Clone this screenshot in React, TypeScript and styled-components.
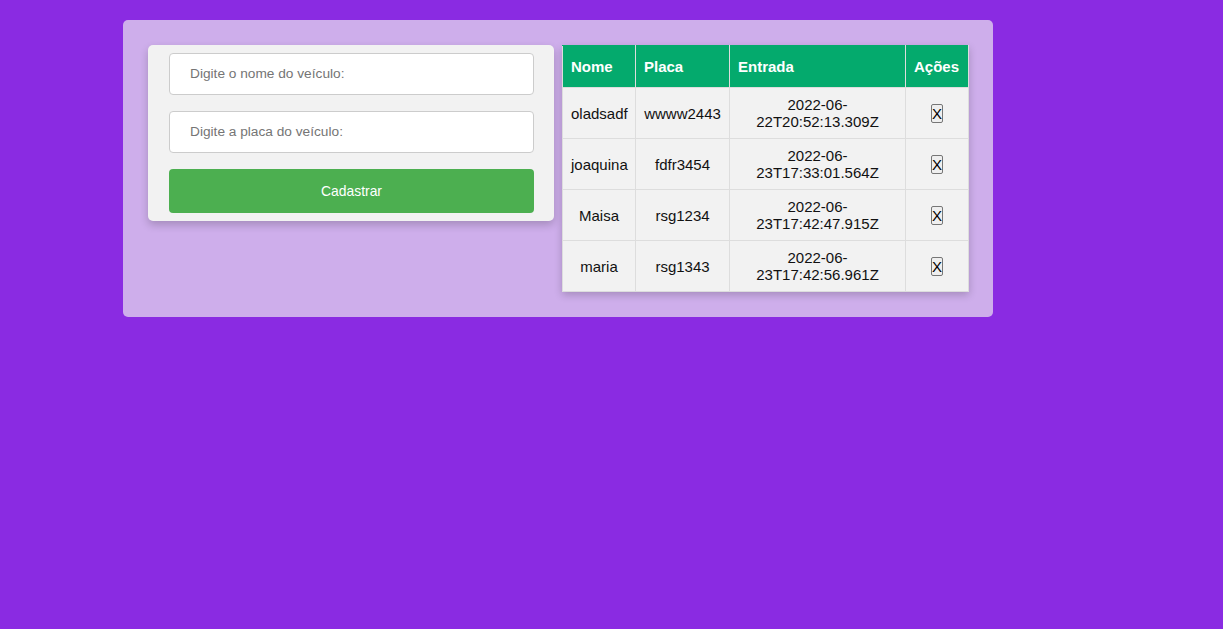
import styled, { createGlobalStyle } from 'styled-components';

const GlobalStyle = createGlobalStyle`
    body {
        margin: 0;
        background: #8a2be2;
        font-family: 'Liberation Sans', Arial, Helvetica, sans-serif;
    }
`;

const Page = styled.div`
    min-height: 629px;
    padding: 20px 0 0 123px;
    box-sizing: border-box;
`;

const Panel = styled.div`
    width: 870px;
    display: flex;
    align-items: flex-start;
    gap: 8px;
    padding: 25px;
    box-sizing: border-box;
    background: #ceaeeb;
    border-radius: 5px;
`;

const FormCard = styled.form`
    flex: 0 0 406px;
    padding: 0 20px 0 21px;
    box-sizing: border-box;
    background: #f2f2f2;
    border-radius: 5px;
    box-shadow: 0 4px 8px rgba(0, 0, 0, 0.2);
`;

const Input = styled.input`
    display: block;
    width: 100%;
    margin: 8px 0 16px;
    padding: 12px 20px;
    box-sizing: border-box;
    border: 1px solid #ccc;
    border-radius: 4px;
    background: #fff;
    font-family: 'Liberation Sans', Arial, sans-serif;
    font-size: 13.7px;
    line-height: 16px;

    &::placeholder {
        color: #757575;
    }
`;

const SubmitButton = styled.button`
    display: block;
    width: 100%;
    margin: 0 0 8px;
    padding: 14px 20px;
    border: none;
    border-radius: 4px;
    background: #4caf50;
    color: #fff;
    font-family: 'Liberation Sans', Arial, sans-serif;
    font-size: 13.9px;
    line-height: 16px;
`;

const TableWrap = styled.div`
    flex: 0 0 406px;
    box-shadow: 0 3px 8px rgba(0, 0, 0, 0.2);
`;

const Table = styled.table`
    width: 100%;
    table-layout: fixed;
    border-collapse: collapse;
    font-size: 15px;
    line-height: 17px;
    color: #111;
`;

const Th = styled.th<{ $w: number }>`
    width: ${(p) => p.$w}px;
    box-sizing: border-box;
    padding: 12px 8px;
    text-align: left;
    background: #04aa6d;
    color: #fff;
    font-weight: bold;
    border: 1px solid #ddd;
    border-top-color: #04aa6d;
    white-space: nowrap;
`;

const Td = styled.td`
    padding: 8px;
    text-align: center;
    background: #f2f2f2;
    border: 1px solid #ddd;
`;

const RemoveButton = styled.button`
    padding: 0;
    font-family: 'Liberation Sans', Arial, sans-serif;
    font-size: 15px;
    line-height: 17px;
    color: #000;
    background: #efefef;
    border: 1px solid #767676;
    border-radius: 2px;
    vertical-align: middle;
`;

const veiculos = [
    { nome: 'oladsadf', placa: 'wwww2443', entrada: '2022-06-22T20:52:13.309Z' },
    { nome: 'joaquina', placa: 'fdfr3454', entrada: '2022-06-23T17:33:01.564Z' },
    { nome: 'Maisa', placa: 'rsg1234', entrada: '2022-06-23T17:42:47.915Z' },
    { nome: 'maria', placa: 'rsg1343', entrada: '2022-06-23T17:42:56.961Z' },
];

const App = () => {
    return (
        <>
            <GlobalStyle />
            <Page>
                <Panel>
                    <FormCard onSubmit={(e) => e.preventDefault()}>
                        <Input type='text' placeholder='Digite o nome do veículo:' />
                        <Input type='text' placeholder='Digite a placa do veículo:' />
                        <SubmitButton type='submit'>Cadastrar</SubmitButton>
                    </FormCard>

                    <TableWrap>
                        <Table>
                            <thead>
                                <tr>
                                    <Th $w={73}>Nome</Th>
                                    <Th $w={94}>Placa</Th>
                                    <Th $w={176}>Entrada</Th>
                                    <Th $w={63}>Ações</Th>
                                </tr>
                            </thead>
                            <tbody>
                                {veiculos.map((v) => {
                                    const [data, hora] = v.entrada.split(/(?<=-\d\d-)/);
                                    return (
                                        <tr key={v.placa}>
                                            <Td>{v.nome}</Td>
                                            <Td>{v.placa}</Td>
                                            <Td>
                                                {data}
                                                <br />
                                                {hora}
                                            </Td>
                                            <Td>
                                                <RemoveButton type='button'>X</RemoveButton>
                                            </Td>
                                        </tr>
                                    );
                                })}
                            </tbody>
                        </Table>
                    </TableWrap>
                </Panel>
            </Page>
        </>
    );
};

export default App;
